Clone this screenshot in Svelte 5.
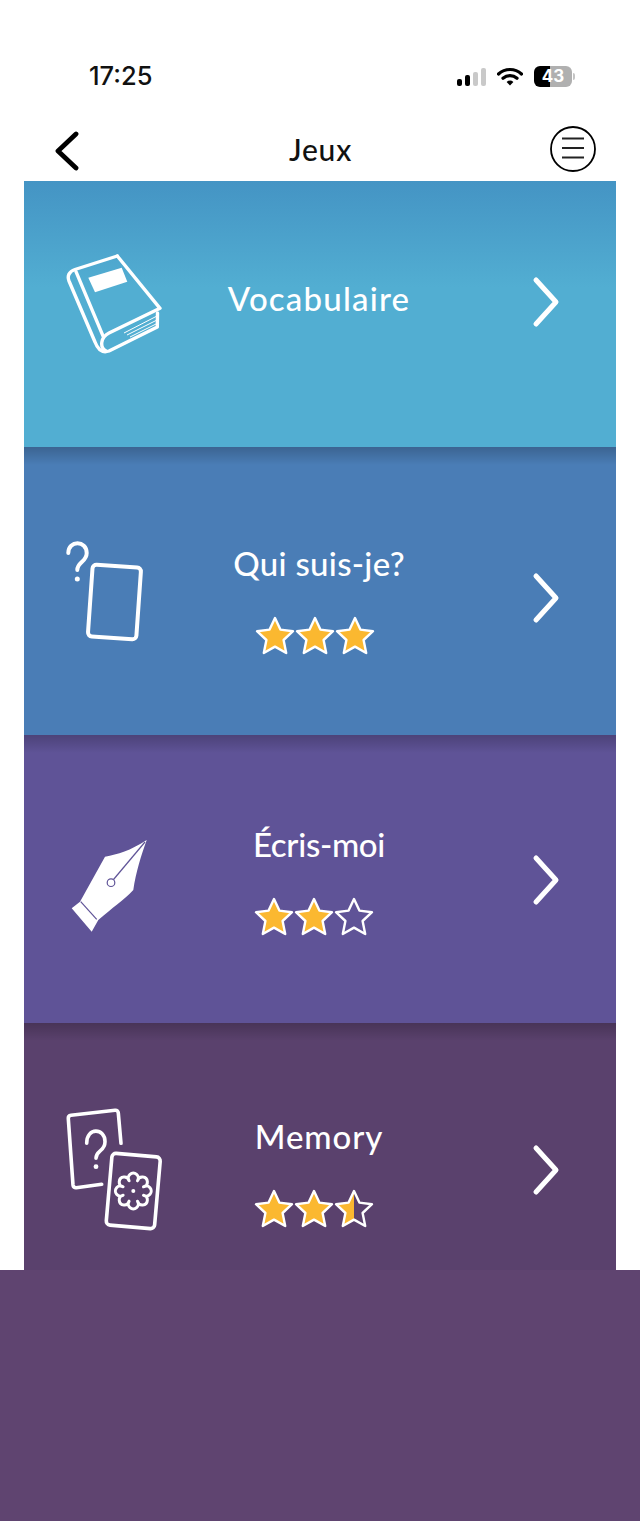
<script>
	const star = '20,2 25.400,13.600 38,15.200 28.600,24 31.200,37 20,30.600 8.800,37 11.400,24 2,15.200 14.600,13.600';

	// scalloped outline for the memory card flower
	function flower(cx, cy, petals, rIn) {
		let d = '';
		for (let i = 0; i <= petals; i++) {
			const a = (i * 2 * Math.PI) / petals + Math.PI / petals;
			const x = (cx + rIn * Math.cos(a)).toFixed(1);
			const y = (cy + rIn * Math.sin(a)).toFixed(1);
			d += i === 0 ? `M${x} ${y}` : ` A5 5 0 1 1 ${x} ${y}`;
		}
		return d + 'Z';
	}

	const games = [
		{ id: 'vocab', title: 'Vocabulaire', view: '50 240 130 130', stars: null },
		{ id: 'qui', title: 'Qui suis-je?', view: '50 525 130 130', stars: [1, 1, 1] },
		{ id: 'ecris', title: 'Écris-moi', view: '50 820 130 130', stars: [1, 1, 0] },
		{ id: 'memory', title: 'Memory', view: '50 1105 130 130', stars: [1, 1, 0.5] }
	];
</script>

<div class="page">
	<div class="status">
		<span class="time">17:25</span>
		<div class="status-icons">
			<div class="signal">
				<i class="b1"></i><i class="b2"></i><i class="b3"></i><i class="b4"></i>
			</div>
			<svg class="wifi" viewBox="0 0 26 19" width="26" height="19">
				<path d="M1.500 7 C8 1 18 1 24.500 7" fill="none" stroke="#000" stroke-width="3.200" stroke-linecap="round" />
				<path d="M6 11.300 C10 7.800 16 7.800 20 11.300" fill="none" stroke="#000" stroke-width="3.200" stroke-linecap="round" />
				<path d="M9.600 15 Q13 12.200 16.400 15 L13 18.600Z" fill="#000" />
			</svg>
			<div class="battery"><span>43</span></div>
			<div class="nub"></div>
		</div>
	</div>

	<header class="topbar">
		<svg class="back" viewBox="0 0 28 40" width="28" height="40">
			<path d="M23 3 L5 20 L23 37" fill="none" stroke="#000" stroke-width="4.800" stroke-linecap="round" stroke-linejoin="round" />
		</svg>
		<h1>Jeux</h1>
		<svg class="menu" viewBox="0 0 46 46" width="46" height="46">
			<circle cx="23" cy="23" r="22" fill="none" stroke="#000" stroke-width="1.800" />
			<path d="M12 12.500H34M12 22H34M12 31.500H34" stroke="#222" stroke-width="1.800" />
		</svg>
	</header>

	<main class="list">
		{#each games as game}
			<section class="card {game.id}">
				<svg class="icon" viewBox={game.view} width="130" height="130">
					{#if game.id === 'vocab'}
						<g fill="none" stroke="#fff" stroke-width="3.400" stroke-linejoin="round" stroke-linecap="round">
							<path d="M117.300 256 L75 269.500 C69 271.500 67 276 69 281 L95 342 C98 350 103 353 109 351 L157.300 327 L157.500 313" />
							<path d="M117.300 256 L160 308.300 L109 333 C101 337 99 347 106 351" />
							<path d="M76 271.700 L103.300 336.700" />
						</g>
						<path d="M157 316 L124 333M157 320 L127 335M156 324 L130 337" stroke="#fff" stroke-width="1" fill="none" />
						<path d="M88.300 277.700 L121.700 267.700 L127.300 281.700 L95 292.300Z" fill="#fff" />
					{:else if game.id === 'qui'}
						<g fill="none" stroke="#fff" stroke-width="4" stroke-linecap="round">
							<path d="M68.300 553 C68.300 540 86.700 540 86.700 553 C86.700 562 77.300 562 77.300 570" />
							<rect x="90.200" y="566" width="48.500" height="72" rx="4" transform="rotate(4 114.500 602)" />
						</g>
						<circle cx="77.300" cy="579" r="2.500" fill="#fff" />
					{:else if game.id === 'ecris'}
						<path d="M146.700 840 C130 851 118 854 105 856.700 L80 901.700 L71.700 908.300 L91.700 931.700 L98.300 920 C112 908 124 900 133.300 890 C136 872 141 856 146.700 840Z" fill="#fff" />
						<path d="M80.700 901.700 L96.700 919.300" stroke="#5f5397" stroke-width="1.200" />
						<path d="M145 842 L113.500 879.500" stroke="#5f5397" stroke-width="1.200" />
						<circle cx="111" cy="882.700" r="3.800" fill="#fff" stroke="#5f5397" stroke-width="1.200" />
					{:else}
						<g fill="none" stroke="#fff" stroke-width="3.600" stroke-linecap="round" stroke-linejoin="round">
							<path d="M121 1143.300 L118.300 1113 Q118 1110 115 1110.300 L71 1115.300 Q68 1115.700 68.300 1118.700 L73 1185 Q73.300 1188 76.300 1187.700 L101.700 1184.300" />
							<path d="M86.700 1143.300 C86.700 1126.700 105 1128 105 1141.700 C105 1151.700 96 1150 96 1158.300" />
							<rect x="109" y="1155" width="48.500" height="72" rx="4" transform="rotate(5 133.300 1191)" />
							<path d={flower(133.3, 1191, 8, 11)} stroke-width="3" />
						</g>
						<circle cx="96" cy="1166.700" r="2.400" fill="#fff" />
						<circle cx="133.300" cy="1191" r="2" fill="#fff" />
					{/if}
				</svg>

				<div class="middle">
					<h2>{game.title}</h2>
					{#if game.stars}
						<div class="stars">
							{#each game.stars as value}
								<svg viewBox="0 0 40 40" width="40" height="40">
									<defs>
										<linearGradient id="half-fill">
											<stop offset="50%" stop-color="#fbb830" />
											<stop offset="50%" stop-color="#fbb830" stop-opacity="0" />
										</linearGradient>
									</defs>
									<polygon
										points={star}
										fill={value === 1 ? '#fbb830' : value === 0 ? 'none' : 'url(#half-fill)'}
										stroke="#fff"
										stroke-width="2.400"
										stroke-linejoin="round"
									/>
								</svg>
							{/each}
						</div>
					{/if}
				</div>

				<svg class="next" viewBox="0 0 28 52" width="28" height="52">
					<path d="M4 4 L24 26 L4 48" fill="none" stroke="#fff" stroke-width="5" stroke-linecap="round" stroke-linejoin="round" />
				</svg>
			</section>
		{/each}
	</main>
	<div class="footer"></div>
</div>

<style>
	:global(body) {
		margin: 0;
		background: #fff;
	}

	.page {
		width: 640px;
		height: 1521px;
		overflow: hidden;
		font-family: Lato, 'Open Sans', sans-serif;
	}

	.status {
		height: 122px;
		box-sizing: border-box;
		padding: 60px 0 0 89px;
		display: flex;
		justify-content: space-between;
		align-items: flex-start;
	}

	.time {
		font-family: Inter, sans-serif;
		font-size: 25.500px;
		font-weight: 500;
		line-height: 32px;
		color: #111;
	}

	.status-icons {
		display: flex;
		align-items: center;
		margin: 6px 65px 0 0;
		height: 21px;
	}

	.signal {
		display: flex;
		align-items: flex-end;
		gap: 3px;
		height: 18px;
		margin-right: 11px;
	}

	.signal i {
		display: block;
		width: 5px;
		border-radius: 2px;
		background: #000;
	}

	.signal .b1 { height: 7px; }
	.signal .b2 { height: 11px; }
	.signal .b3 { height: 14px; background: #c9c9c9; }
	.signal .b4 { height: 18px; background: #c9c9c9; }

	.wifi {
		margin-right: 11px;
	}

	.battery {
		width: 38px;
		height: 21px;
		border-radius: 6px;
		background: linear-gradient(90deg, #000 42%, #b0b0b0 42%);
		color: #fff;
		font-family: Inter, sans-serif;
		font-size: 17px;
		font-weight: 700;
		line-height: 21px;
		text-align: center;
	}

	.nub {
		width: 2px;
		height: 7px;
		margin-left: 1px;
		border-radius: 0 2px 2px 0;
		background: #c4c4c4;
	}

	.topbar {
		height: 59px;
		padding: 0 44px 0 52px;
		display: grid;
		grid-template-columns: 1fr auto 1fr;
		align-items: start;
	}

	.back {
		margin: 9px 0 0 1px;
	}

	.topbar h1 {
		margin: 7px 0 0 -7px;
		font-size: 30px;
		font-weight: 500;
		line-height: 40px;
		letter-spacing: 0.8px;
		color: #111;
	}

	.menu {
		justify-self: end;
		margin-top: 4px;
	}

	.list {
		margin: 0 24px;
	}

	.card {
		display: grid;
		grid-template-columns: 1fr auto 1fr;
		align-items: start;
		color: #fff;
	}

	.icon {
		margin: var(--icon-top) 0 0 26px;
	}

	.middle {
		margin-top: var(--text-top);
		text-align: center;
		transform: translateX(-1px);
	}

	.next {
		justify-self: end;
		margin: var(--next-top) 56px 0 0;
	}

	h2 {
		margin: 0;
		font-size: 33px;
		font-weight: 500;
		line-height: 40px;
		letter-spacing: var(--track);
		white-space: nowrap;
	}

	.stars {
		display: flex;
		justify-content: center;
		margin: 33px 0 0 var(--stars-shift);
	}

	.stars svg {
		display: block;
	}

	.vocab {
		height: 266px;
		background: linear-gradient(#4494c4, #52aed2 40%);
		--icon-top: 59px;
		--text-top: 97px;
		--next-top: 95px;
		--track: 1.200px;
	}

	.qui {
		height: 288px;
		background: linear-gradient(rgba(0, 0, 0, 0.2), transparent 18px), #4a7db6;
		--icon-top: 78px;
		--text-top: 96px;
		--next-top: 125px;
		--track: 0.300px;
		--stars-shift: -8px;
	}

	.ecris {
		height: 288px;
		background: linear-gradient(rgba(0, 0, 0, 0.2), transparent 18px), #5f5397;
		--icon-top: 85px;
		--text-top: 89px;
		--next-top: 119px;
		--track: -0.300px;
		--stars-shift: -10px;
	}

	.memory {
		height: 247px;
		background: linear-gradient(rgba(0, 0, 0, 0.2), transparent 18px), #5a416d;
		--icon-top: 82px;
		--text-top: 93px;
		--next-top: 121px;
		--track: 0.900px;
		--stars-shift: -10px;
	}

	.footer {
		height: 251px;
		background: #5f4470;
	}
</style>
